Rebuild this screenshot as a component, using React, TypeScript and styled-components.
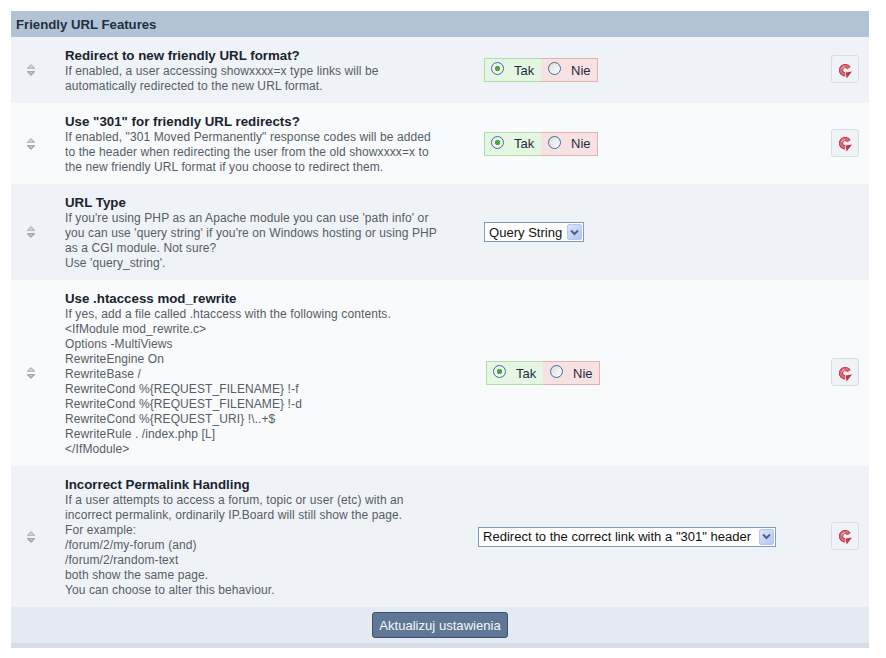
import React from 'react';
import styled, { createGlobalStyle } from 'styled-components';

interface Setting {
  title: string;
  lines: string[];
  control: 'yesno' | 'select';
  offset: number;
  value?: string;
  selectWidth?: number;
  height: number;
  canReset: boolean;
}

const settings: Setting[] = [
  {
    title: 'Redirect to new friendly URL format?',
    lines: [
      'If enabled, a user accessing showxxxx=x type links will be',
      'automatically redirected to the new URL format.',
    ],
    control: 'yesno',
    offset: 473,
    height: 66,
    canReset: true,
  },
  {
    title: 'Use "301" for friendly URL redirects?',
    lines: [
      'If enabled, "301 Moved Permanently" response codes will be added',
      'to the header when redirecting the user from the old showxxxx=x to',
      'the new friendly URL format if you choose to redirect them.',
    ],
    control: 'yesno',
    offset: 473,
    height: 81,
    canReset: true,
  },
  {
    title: 'URL Type',
    lines: [
      "If you're using PHP as an Apache module you can use 'path info' or",
      "you can use 'query string' if you're on Windows hosting or using PHP",
      'as a CGI module. Not sure?',
      "Use 'query_string'.",
    ],
    control: 'select',
    value: 'Query String',
    selectWidth: 100,
    offset: 473,
    height: 96,
    canReset: false,
  },
  {
    title: 'Use .htaccess mod_rewrite',
    lines: [
      'If yes, add a file called .htaccess with the following contents.',
      '<IfModule mod_rewrite.c>',
      'Options -MultiViews',
      'RewriteEngine On',
      'RewriteBase /',
      'RewriteCond %{REQUEST_FILENAME} !-f',
      'RewriteCond %{REQUEST_FILENAME} !-d',
      'RewriteCond %{REQUEST_URI} !\\..+$',
      'RewriteRule . /index.php [L]',
      '</IfModule>',
    ],
    control: 'yesno',
    offset: 475,
    height: 186,
    canReset: true,
  },
  {
    title: 'Incorrect Permalink Handling',
    lines: [
      'If a user attempts to access a forum, topic or user (etc) with an',
      'incorrect permalink, ordinarily IP.Board will still show the page.',
      'For example:',
      '/forum/2/my-forum (and)',
      '/forum/2/random-text',
      'both show the same page.',
      'You can choose to alter this behaviour.',
    ],
    control: 'select',
    value: 'Redirect to the correct link with a "301" header',
    selectWidth: 298,
    offset: 467,
    height: 141,
    canReset: true,
  },
];

const GlobalStyle = createGlobalStyle`
  html, body {
    margin: 0;
    padding: 0;
    background: #fff;
  }
  body {
    font-family: "Liberation Sans", Arial, sans-serif;
  }
`;

const Page = styled.div`
  width: 858px;
  margin: 0 0 0 11px;
  padding-top: 11px;
  padding-bottom: 10px;
`;

const Header = styled.h2`
  margin: 0;
  height: 26px;
  line-height: 27px;
  padding-left: 5px;
  background: #b3c3d6;
  color: #23303f;
  font-size: 13.2px;
  font-weight: bold;
`;

const Row = styled.div<{ $alt: boolean; $height: number }>`
  display: flex;
  align-items: center;
  height: ${({ $height }) => $height}px;
  background: ${({ $alt }) => ($alt ? '#f8fafc' : '#eff3f7')};
`;

const Handle = styled.div`
  flex: 0 0 54px;
  display: flex;
  justify-content: center;
  padding-right: 15px;
  box-sizing: border-box;
`;

const Info = styled.div`
  flex: 0 0 auto;
  width: 0;
  padding-top: 2px;
  white-space: nowrap;
`;

const Title = styled.div`
  color: #1a2430;
  font-size: 13.3px;
  font-weight: bold;
  line-height: 16px;
`;

const Description = styled.div`
  color: #555d66;
  font-size: 12px;
  letter-spacing: 0.1px;
  line-height: 14.9px;
`;

const Control = styled.div<{ $offset: number }>`
  flex: 1;
  display: flex;
  align-items: center;
  padding-left: ${({ $offset }) => $offset - 54}px;
`;

const YesNo = styled.div`
  display: flex;
  height: 24px;
  margin-top: 0.5px;
  font-size: 13px;
  color: #1f2a3d;
`;

const Choice = styled.label<{ $yes: boolean }>`
  display: flex;
  align-items: center;
  box-sizing: border-box;
  height: 24px;
  width: 57px;
  padding-left: ${({ $yes }) => ($yes ? '6px' : '7px')};
  background: ${({ $yes }) => ($yes ? '#e5f6e3' : '#f7e2e3')};
  border: 1px solid ${({ $yes }) => ($yes ? '#afdfa9' : '#e4b0b2')};
  border-left-width: ${({ $yes }) => ($yes ? '1px' : '0')};
  border-right-width: ${({ $yes }) => ($yes ? '0' : '1px')};
`;

const Radio = styled.input.attrs({ type: 'radio' })`
  appearance: none;
  box-sizing: border-box;
  flex: none;
  width: 13px;
  height: 13px;
  margin: 0 10px 3px 0;
  border: 1px solid #3f6d9a;
  border-radius: 50%;
  background: linear-gradient(135deg, #dcdcd8, #ffffff);

  &:checked {
    background: radial-gradient(circle, #3fae3f 0, #3fae3f 2.4px, #f2f2ee 3px);
  }
`;

const SelectBox = styled.div<{ $width: number }>`
  display: flex;
  align-items: center;
  justify-content: space-between;
  box-sizing: border-box;
  width: ${({ $width }) => $width}px;
  height: 20px;
  padding: 0 1px 0 4px;
  background: #fff;
  border: 1px solid #7f9db9;
  color: #111;
  font-size: 13.05px;
  white-space: nowrap;
`;

const SelectArrow = styled.span`
  display: flex;
  align-items: center;
  justify-content: center;
  box-sizing: border-box;
  width: 15px;
  height: 16px;
  border: 1px solid #b4c7ee;
  border-radius: 2px;
  background: linear-gradient(135deg, #dbe6fb, #b2c5f2);
`;

const ResetButton = styled.button`
  display: flex;
  align-items: center;
  justify-content: center;
  box-sizing: border-box;
  width: 28px;
  height: 28px;
  padding: 4px 0 0 2px;
  margin: 0 10px 2px 0;
  background: #eff3f7;
  border: 1px solid #d5dde5;
  border-radius: 3px;
`;

const Footer = styled.div`
  display: flex;
  justify-content: center;
  align-items: flex-start;
  box-sizing: border-box;
  height: 41px;
  padding-top: 5px;
  background: #e4eaf2;
  border-bottom: 5px solid #d5dde5;
`;

const SubmitButton = styled.button`
  height: 26px;
  width: 136px;
  padding: 0;
  background: #5f7694;
  border: 1px solid #3e5170;
  border-radius: 3px;
  color: #f4f6f9;
  font-family: "Liberation Sans", Arial, sans-serif;
  font-size: 13.1px;
`;

const SortIcon = () => (
  <svg width="8" height="12" viewBox="0 0 8 12">
    <path d="M4 0 L8 4 L8 5 L0 5 L0 4 Z" fill="#b6bcc0" />
    <path d="M4 2 L5.5 3.6 L2.5 3.6 Z" fill="#e8ebee" />
    <path d="M0 7 L8 7 L8 8 L4 12 L0 8 Z" fill="#a4aaae" />
    <path d="M2.5 8.2 L5.5 8.2 L4 9.8 Z" fill="#d4d8db" />
  </svg>
);

const ArrowIcon = () => (
  <svg width="9" height="7" viewBox="0 0 9 7">
    <path d="M1 1.5 L4.5 5 L8 1.5" fill="none" stroke="#4d6185" strokeWidth="2" />
  </svg>
);

const RevertIcon = () => (
  <svg width="14" height="15" viewBox="0 0 14 15">
    <path d="M9.84 4.1 A4.2 4.2 0 1 0 6.2 10.4" fill="none" stroke="#b5303f" strokeWidth="4.2" />
    <path d="M9.84 4.1 A4.2 4.2 0 1 0 6.2 10.4" fill="none" stroke="#dc6672" strokeWidth="2.8" />
    <path d="M6.8 8.4 L13 7.4 L7.6 14.4 Z" fill="#bd3645" />
    <path d="M2.6 5.4 C3 3.8 4.2 2.8 5.8 2.6" fill="none" stroke="#f0aab1" strokeWidth="1.1" />
  </svg>
);

const App: React.FC = () => {
  return (
    <Page>
      <GlobalStyle />
      <Header>Friendly URL Features</Header>
      {settings.map((setting, i) => (
        <Row key={setting.title} $alt={i % 2 === 1} $height={setting.height}>
          <Handle>
            <SortIcon />
          </Handle>
          <Info>
            <Title>{setting.title}</Title>
            <Description>
              {setting.lines.map((line) => (
                <div key={line}>{line}</div>
              ))}
            </Description>
          </Info>
          <Control $offset={setting.offset}>
            {setting.control === 'yesno' ? (
              <YesNo>
                <Choice $yes>
                  <Radio name={setting.title} defaultChecked />
                  Tak
                </Choice>
                <Choice $yes={false}>
                  <Radio name={setting.title} />
                  Nie
                </Choice>
              </YesNo>
            ) : (
              <SelectBox $width={setting.selectWidth ?? 100}>
                {setting.value}
                <SelectArrow>
                  <ArrowIcon />
                </SelectArrow>
              </SelectBox>
            )}
          </Control>
          {setting.canReset && (
            <ResetButton>
              <RevertIcon />
            </ResetButton>
          )}
        </Row>
      ))}
      <Footer>
        <SubmitButton>Aktualizuj ustawienia</SubmitButton>
      </Footer>
    </Page>
  );
};

export default App;
